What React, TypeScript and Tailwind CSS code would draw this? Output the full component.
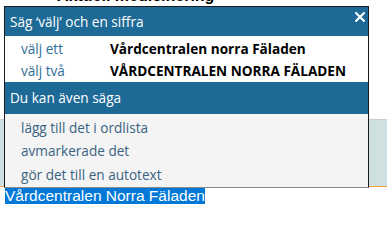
const choices = [
    { say: 'välj ett', value: 'Vårdcentralen norra Fäladen' },
    { say: 'välj två', value: 'VÅRDCENTRALEN NORRA FÄLADEN' },
];

const extras = ['lägg till det i ordlista', 'avmarkerade det', 'gör det till en autotext'];

export default function App() {
    return (
        <div className="relative w-[387px] h-[212px] overflow-hidden bg-white" style={{ fontFamily: '"Open Sans", "Noto Sans", sans-serif' }}>
            {/* page behind the popup */}
            <div className="h-[119px] overflow-hidden">
                <div className="-mt-[13px] pl-[57px] text-[16px] leading-[18px] font-bold text-black" style={{ fontFamily: '"Liberation Sans", Arial, sans-serif' }}>
                    Aktuell medicinering
                </div>
            </div>
            <div className="h-[67px] bg-[#cfe0e1] border-t border-[#c3cfd0]" />
            <div className="h-px bg-[#f0a040]" />
            <div className="pl-[5px] leading-[17px]">
                <span className="bg-[#0078d7] text-white text-[15.5px]" style={{ fontFamily: '"Liberation Sans", Arial, sans-serif' }}>
                    Vårdcentralen Norra Fäladen
                </span>
            </div>

            {/* voice command popup */}
            <div className="absolute left-[4px] top-[6px] w-[365px] border-x border-t border-[#1a1a1a] border-b border-b-[#8a8a8a] bg-white text-[13.6px]">
                <div className="flex justify-between h-[29px] bg-[#1e6a97] pl-[5px] pr-[3px] text-white">
                    <span className="leading-[29px]">Säg ‘välj’ och en siffra</span>
                    <svg viewBox="0 0 10 10" className="w-[10px] h-[10px] mt-[5px]" stroke="white" strokeWidth={2.2} strokeLinecap="square">
                        <path d="M1.2 1.2 8.8 8.8M8.8 1.2 1.2 8.8" />
                    </svg>
                </div>
                <div className="pt-[2px]">
                    {choices.map((c) => (
                        <div key={c.say} className="flex items-center h-[22px]">
                            <span className="w-[105px] pl-[16px] text-[#2f6e98]">{c.say}</span>
                            <span className="font-bold text-black">{c.value}</span>
                        </div>
                    ))}
                </div>
                <div className="flex items-center h-[32px] bg-[#1e6a97] pl-[5px] text-white">
                    Du kan även säga
                </div>
                <div className="bg-[#f4f4f4] pt-[2px] pb-[0.5px]">
                    {extras.map((e) => (
                        <div key={e} className="flex items-center h-[23.5px] pl-[16px] text-[#3a6382]">
                            {e}
                        </div>
                    ))}
                </div>
            </div>
        </div>
    );
}
